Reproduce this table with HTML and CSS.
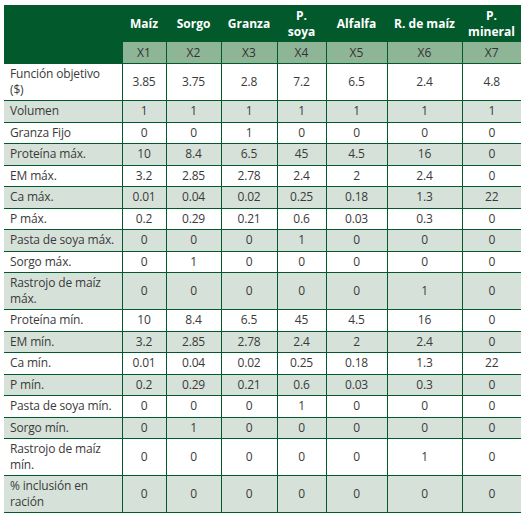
FILE: index.html
```html
<!DOCTYPE html>
<html lang="es">
<head>
<meta charset="utf-8">
<title>Tabla</title>
<link rel="stylesheet" href="styles.css">
</head>
<body>
<table class="tbl">
  <colgroup>
    <col class="c-label"><col class="c1"><col class="c2"><col class="c3"><col class="c4"><col class="c5"><col class="c6"><col class="c7">
  </colgroup>
  <thead>
    <tr class="h-names">
      <th></th><th>Maíz</th><th>Sorgo</th><th>Granza</th><th>P.<br>soya</th><th>Alfalfa</th><th>R. de maíz</th><th>P.<br>mineral</th>
    </tr>
    <tr class="h-vars">
      <th class="blank"></th><th>X1</th><th>X2</th><th>X3</th><th>X4</th><th>X5</th><th>X6</th><th>X7</th>
    </tr>
  </thead>
  <tbody>
    <tr class="tall"><td>Función objetivo<br>($)</td><td>3.85</td><td>3.75</td><td>2.8</td><td>7.2</td><td>6.5</td><td>2.4</td><td>4.8</td></tr>
    <tr class="alt"><td>Volumen</td><td>1</td><td>1</td><td>1</td><td>1</td><td>1</td><td>1</td><td>1</td></tr>
    <tr><td>Granza Fijo</td><td>0</td><td>0</td><td>1</td><td>0</td><td>0</td><td>0</td><td>0</td></tr>
    <tr class="alt"><td>Proteína máx.</td><td>10</td><td>8.4</td><td>6.5</td><td>45</td><td>4.5</td><td>16</td><td>0</td></tr>
    <tr><td>EM máx.</td><td>3.2</td><td>2.85</td><td>2.78</td><td>2.4</td><td>2</td><td>2.4</td><td>0</td></tr>
    <tr class="alt"><td>Ca máx.</td><td>0.01</td><td>0.04</td><td>0.02</td><td>0.25</td><td>0.18</td><td>1.3</td><td>22</td></tr>
    <tr><td>P máx.</td><td>0.2</td><td>0.29</td><td>0.21</td><td>0.6</td><td>0.03</td><td>0.3</td><td>0</td></tr>
    <tr class="alt"><td>Pasta de soya máx.</td><td>0</td><td>0</td><td>0</td><td>1</td><td>0</td><td>0</td><td>0</td></tr>
    <tr><td>Sorgo máx.</td><td>0</td><td>1</td><td>0</td><td>0</td><td>0</td><td>0</td><td>0</td></tr>
    <tr class="alt tall"><td>Rastrojo de maíz máx.</td><td>0</td><td>0</td><td>0</td><td>0</td><td>0</td><td>1</td><td>0</td></tr>
    <tr><td>Proteína mín.</td><td>10</td><td>8.4</td><td>6.5</td><td>45</td><td>4.5</td><td>16</td><td>0</td></tr>
    <tr class="alt"><td>EM mín.</td><td>3.2</td><td>2.85</td><td>2.78</td><td>2.4</td><td>2</td><td>2.4</td><td>0</td></tr>
    <tr><td>Ca mín.</td><td>0.01</td><td>0.04</td><td>0.02</td><td>0.25</td><td>0.18</td><td>1.3</td><td>22</td></tr>
    <tr class="alt"><td>P mín.</td><td>0.2</td><td>0.29</td><td>0.21</td><td>0.6</td><td>0.03</td><td>0.3</td><td>0</td></tr>
    <tr><td>Pasta de soya mín.</td><td>0</td><td>0</td><td>0</td><td>1</td><td>0</td><td>0</td><td>0</td></tr>
    <tr class="alt"><td>Sorgo mín.</td><td>0</td><td>1</td><td>0</td><td>0</td><td>0</td><td>0</td><td>0</td></tr>
    <tr class="tall"><td>Rastrojo de maíz mín.</td><td>0</td><td>0</td><td>0</td><td>0</td><td>0</td><td>1</td><td>0</td></tr>
    <tr class="alt tall"><td>% inclusión en ración</td><td>0</td><td>0</td><td>0</td><td>0</td><td>0</td><td>0</td><td>0</td></tr>
  </tbody>
</table>
</body>
</html>
```
FILE: styles.css
```css
html, body {
  margin: 0;
  padding: 0;
  background: #ffffff;
}
body {
  padding: 5px 4px 0 4px;
  font-family: "Open Sans", "Noto Sans", sans-serif;
  font-size: 12px;
  color: #3a3a3a;
}
.tbl {
  width: 517px;
  border-collapse: collapse;
  table-layout: fixed;
}
.c-label { width: 118px; }
.c1 { width: 44px; }
.c2 { width: 55px; }
.c3 { width: 56px; }
.c4 { width: 49px; }
.c5 { width: 61px; }
.c6 { width: 75px; }
.c7 { width: 59px; }

.tbl th, .tbl td {
  padding: 0;
  text-align: center;
  vertical-align: middle;
}
.h-names th {
  background: #02592b;
  color: #ffffff;
  font-weight: 700;
  font-size: 12px;
  line-height: 16px;
  height: 37px;
}
.h-vars th {
  background: #8fb597;
  color: #333333;
  font-weight: 400;
  font-size: 12px;
  line-height: 15px;
  height: 21px;
  border-left: 1px solid #02592b;
}
.h-vars th.blank {
  background: #02592b;
  border-left: none;
}
.tbl td {
  height: 20.5px;
  border-top: 1px solid #02592b;
  border-bottom: 1px solid #02592b;
  border-left: 1px solid #02592b;
  font-size: 12px;
  letter-spacing: -0.15px;
  line-height: 16px;
}
.tbl td:first-child {
  text-align: left;
  padding-left: 6px;
  border-left: none;
}
.tbl tr.tall td {
  height: 36px;
}
.tbl tr.alt td {
  background: #d6e2d9;
}
```
